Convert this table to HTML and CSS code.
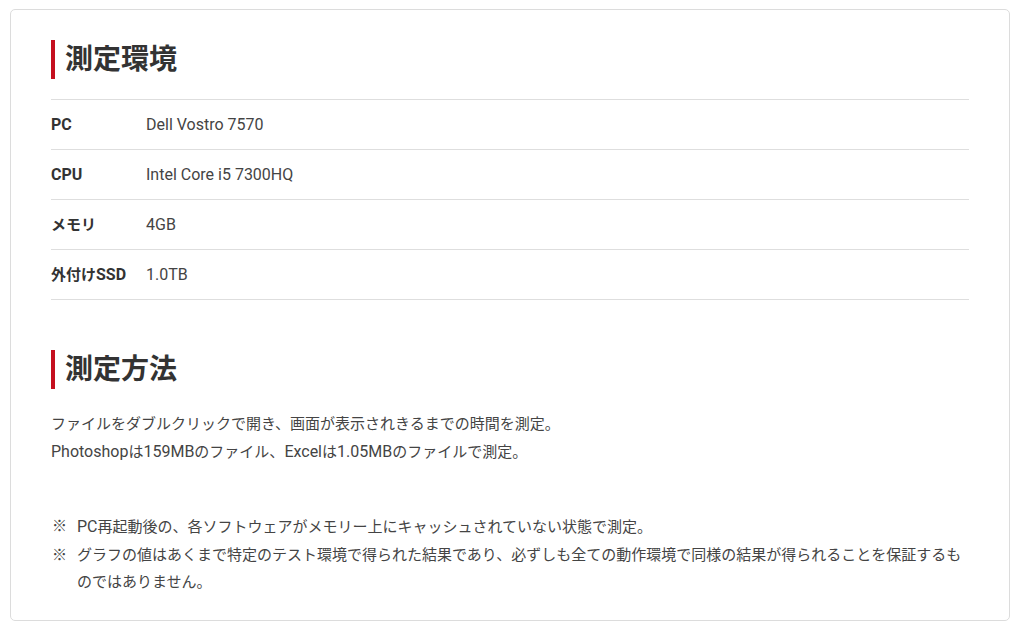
FILE: index.html
```html
<!DOCTYPE html>
<html lang="ja">
<head>
<meta charset="utf-8">
<link rel="stylesheet" href="styles.css">
</head>
<body>
<div class="card">
  <h2 class="heading">測定環境</h2>
  <div class="spec">
    <div class="row"><div class="label"><span class="en">PC</span></div><div class="value"><span class="en">Dell Vostro 7570</span></div></div>
    <div class="row"><div class="label"><span class="en">CPU</span></div><div class="value"><span class="en">Intel Core i5 7300HQ</span></div></div>
    <div class="row"><div class="label">メモリ</div><div class="value"><span class="en">4GB</span></div></div>
    <div class="row"><div class="label">外付け<span class="en">SSD</span></div><div class="value"><span class="en">1.0TB</span></div></div>
  </div>
  <h2 class="heading heading-second">測定方法</h2>
  <p class="text">ファイルをダブルクリックで開き、画面が表示されきるまでの時間を測定。<br><span class="en">Photoshop</span>は<span class="en">159MB</span>のファイル、<span class="en">Excel</span>は<span class="en">1.05MB</span>のファイルで測定。</p>
  <ul class="notes">
    <li class="note"><span class="mark">※</span><span class="note-text"><span class="en">PC</span>再起動後の、各ソフトウェアがメモリー上にキャッシュされていない状態で測定。</span></li>
    <li class="note"><span class="mark">※</span><span class="note-text">グラフの値はあくまで特定のテスト環境で得られた結果であり、必ずしも全ての動作環境で同様の結果が得られることを保証するものではありません。</span></li>
  </ul>
</div>
</body>
</html>
```

FILE: styles.css
```css
html, body {
  margin: 0;
  padding: 0;
  background: #fff;
}
body {
  padding: 9px 11px 0 10px;
  font-family: Roboto, "Noto Sans CJK JP", sans-serif;
  color: #333;
  font-size: 15px;
}
.en {
  font-size: 16px;
}
.card {
  width: 1000px;
  box-sizing: border-box;
  border: 1px solid #dcdcdc;
  border-radius: 5px;
  padding: 30px 40px 23px 40px;
}
.heading {
  margin: 0;
  border-left: 4px solid #c50f1f;
  padding-left: 10px;
  font-size: 28px;
  line-height: 39px;
  font-weight: 700;
  color: #333;
}
.heading-second {
  margin-top: 50px;
}
.spec {
  margin-top: 20px;
  border-top: 1px solid #dedede;
}
.row {
  display: flex;
  align-items: center;
  height: 49px;
  border-bottom: 1px solid #dedede;
  line-height: 20px;
}
.label {
  width: 95px;
  font-weight: 700;
  flex-shrink: 0;
}
.value {
  color: #444;
}
.text {
  margin: 21px 0 0 0;
  line-height: 28px;
  color: #444;
}
.notes {
  list-style: none;
  margin: 47px 0 0 0;
  padding: 0;
  color: #444;
  line-height: 27.5px;
  width: 917px;
}
.note {
  display: flex;
}
.mark {
  width: 25px;
  flex-shrink: 0;
  padding-left: 1px;
}
.note-text {
  flex: 1;
}
```
